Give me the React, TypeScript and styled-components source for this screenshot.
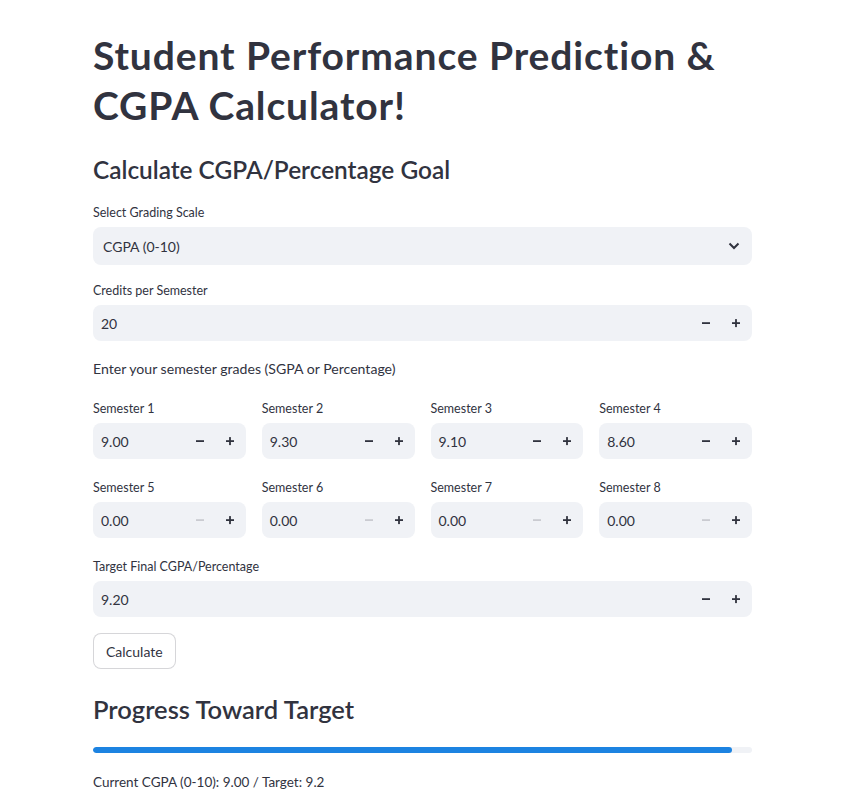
import React from 'react';
import styled, { createGlobalStyle } from 'styled-components';

const GlobalStyle = createGlobalStyle`
  html, body {
    margin: 0;
    padding: 0;
    background: #ffffff;
  }
  body {
    font-family: "Source Sans Pro", Lato, "Liberation Sans", sans-serif;
    color: #31333f;
    -webkit-font-smoothing: antialiased;
  }
`;

const Page = styled.main`
  width: 659px;
  padding: 30px 0 40px 93px;
  display: flex;
  flex-direction: column;
`;

const Title = styled.h1`
  margin: 0;
  font-size: 39px;
  line-height: 50px;
  font-weight: 700;
  letter-spacing: 0.9px;
`;

const SectionHeading = styled.h2`
  margin: 23px 0 0;
  font-size: 24.4px;
  line-height: 34px;
  font-weight: 600;
`;

const SubHeading = styled.h3`
  margin: 23px 0 0;
  font-size: 25.5px;
  line-height: 34px;
  font-weight: 600;
`;

const Field = styled.div<{ $gap?: number }>`
  display: flex;
  flex-direction: column;
  margin-top: ${(p) => p.$gap ?? 16}px;
`;

const Label = styled.label`
  font-size: 12.5px;
  line-height: 20px;
  margin-bottom: 4px;
`;

const Control = styled.div`
  height: 36px;
  background: #f0f2f6;
  border-radius: 8px;
  display: flex;
  align-items: center;
  box-sizing: border-box;
`;

const SelectBox = styled(Control)`
  height: 38px;
  padding: 0 12px 0 10px;
  justify-content: space-between;
`;

const Value = styled.span`
  flex: 1;
  font-size: 14px;
  padding-left: 8px;
`;

const SelectValue = styled.span`
  font-size: 14px;
`;

const StepButton = styled.button<{ $disabled?: boolean }>`
  width: 30px;
  height: 100%;
  border: none;
  background: transparent;
  padding: 0;
  display: flex;
  align-items: center;
  justify-content: center;
  color: ${(p) => (p.$disabled ? 'rgba(49, 51, 63, 0.2)' : '#31333f')};
  cursor: pointer;
`;

const Steppers = styled.div`
  display: flex;
  height: 100%;
  padding-right: 1px;
`;

const Text = styled.p`
  margin: 18px 0 0;
  font-size: 14.1px;
  line-height: 20px;
`;

const Grid = styled.div`
  display: grid;
  grid-template-columns: repeat(4, 1fr);
  column-gap: 16px;
`;

const Button = styled.button`
  align-self: flex-start;
  margin-top: 16px;
  height: 36px;
  padding: 0 12px;
  background: #ffffff;
  border: 1px solid rgba(49, 51, 63, 0.2);
  border-radius: 8px;
  font-family: inherit;
  font-size: 14px;
  color: #31333f;
  cursor: pointer;
`;

const Track = styled.div`
  margin-top: 21px;
  height: 6px;
  border-radius: 3px;
  background: #f0f2f6;
  overflow: hidden;
`;

const Fill = styled.div`
  height: 100%;
  border-radius: 3px;
  background: #1c83e1;
`;

const Caption = styled.p`
  margin: 19px 0 0;
  font-size: 13.5px;
  line-height: 20px;
`;

const Minus = () => (
  <svg width="10" height="10" viewBox="0 0 10 10">
    <rect x="1" y="4.2" width="8" height="1.8" fill="currentColor" />
  </svg>
);

const Plus = () => (
  <svg width="10" height="10" viewBox="0 0 10 10">
    <rect x="1" y="4.2" width="8" height="1.8" fill="currentColor" />
    <rect x="4.1" y="1.1" width="1.8" height="8" fill="currentColor" />
  </svg>
);

const Chevron = () => (
  <svg width="12" height="8" viewBox="0 0 12 8">
    <path d="M1.5 1.5 L6 6 L10.5 1.5" fill="none" stroke="#31333f" strokeWidth="2" />
  </svg>
);

interface NumberInputProps {
  value: string;
  atMin?: boolean;
}

const NumberInput = ({ value, atMin }: NumberInputProps) => (
  <Control>
    <Value>{value}</Value>
    <Steppers>
      <StepButton $disabled={atMin} aria-label="decrement">
        <Minus />
      </StepButton>
      <StepButton aria-label="increment">
        <Plus />
      </StepButton>
    </Steppers>
  </Control>
);

const semesters = ['9.00', '9.30', '9.10', '8.60', '0.00', '0.00', '0.00', '0.00'];

export default function App() {
  const current = 9.0;
  const target = 9.2;
  const pct = Math.floor((current / target) * 100);

  return (
    <>
      <GlobalStyle />
      <Page>
        <Title>
          Student Performance Prediction &amp;
          <br />
          CGPA Calculator!
        </Title>
        <SectionHeading>Calculate CGPA/Percentage Goal</SectionHeading>

        <Field>
          <Label>Select Grading Scale</Label>
          <SelectBox>
            <SelectValue>CGPA (0-10)</SelectValue>
            <Chevron />
          </SelectBox>
        </Field>

        <Field>
          <Label>Credits per Semester</Label>
          <NumberInput value="20" />
        </Field>

        <Text>Enter your semester grades (SGPA or Percentage)</Text>

        <Grid>
          {semesters.map((v, i) => (
            <Field key={i} $gap={i < 4 ? 20 : 19}>
              <Label>Semester {i + 1}</Label>
              <NumberInput value={v} atMin={parseFloat(v) === 0} />
            </Field>
          ))}
        </Grid>

        <Field $gap={19}>
          <Label>Target Final CGPA/Percentage</Label>
          <NumberInput value="9.20" />
        </Field>

        <Button>Calculate</Button>

        <SubHeading>Progress Toward Target</SubHeading>
        <Track>
          <Fill style={{ width: `${pct}%` }} />
        </Track>
        <Caption>
          Current CGPA (0-10): {current.toFixed(2)} / Target: {target}
        </Caption>
      </Page>
    </>
  );
}
